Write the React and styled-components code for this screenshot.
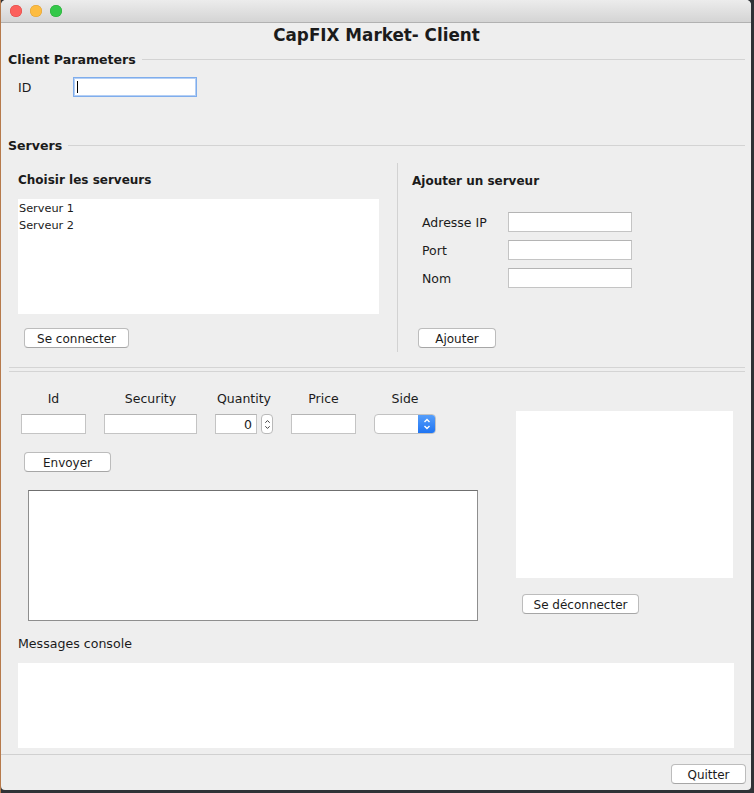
import styled, { createGlobalStyle } from 'styled-components';

const GlobalStyle = createGlobalStyle`
	html, body {
		margin: 0;
		padding: 0;
	}
	body {
		width: 754px;
		height: 793px;
		overflow: hidden;
		background: linear-gradient(to right, #b67a4c 0, #b67a4c 1px, #2f3236 1px);
		font-family: "DejaVu Sans", sans-serif;
	}
`;

const Window = styled.div`
	width: 750px;
	height: 790px;
	margin-left: 1px;
	background: #eeeeee;
	border-radius: 5px 5px 4px 4px;
	overflow: hidden;
	display: flex;
	flex-direction: column;
	color: #1b1b1b;
`;

const TitleBar = styled.div`
	height: 22px;
	flex-shrink: 0;
	display: flex;
	align-items: center;
	gap: 8px;
	padding-left: 9px;
	background: linear-gradient(#ececec, #d4d4d4);
	border-bottom: 1px solid #b1b1b1;
`;

const Light = styled.span`
	width: 12px;
	height: 12px;
	border-radius: 50%;
	background: ${(p) => p.$color};
	box-shadow: inset 0 0 0 0.5px ${(p) => p.$edge};
`;

const Content = styled.div`
	display: flex;
	flex-direction: column;
	padding: 0 6px 0 7px;
`;

const Title = styled.div`
	height: 24px;
	line-height: 24px;
	text-align: center;
	font-weight: bold;
	font-size: 16.8px;
`;

const Legend = styled.div`
	display: flex;
	align-items: center;
	gap: 6px;
	height: 16px;
	margin-top: ${(p) => p.$top}px;
	font-weight: bold;
	font-size: 12.6px;

	&::after {
		content: '';
		flex: 1;
		height: 1px;
		background: #d3d3d3;
	}
`;

const IdRow = styled.div`
	display: flex;
	align-items: center;
	margin-top: 10px;
	padding-left: 10px;
	font-size: 12.5px;
`;

const IdLabel = styled.span`
	width: 55px;
`;

const FocusField = styled.div`
	width: 124px;
	height: 20px;
	box-sizing: border-box;
	background: #fff;
	border: 1px solid #7fadec;
	box-shadow: inset 0 0 0 1px #b4cff5;
	display: flex;
	align-items: center;
	padding-left: 3px;
`;

const Caret = styled.span`
	width: 1px;
	height: 12px;
	background: #000;
`;

const ServersBody = styled.div`
	display: grid;
	grid-template-columns: 390px 1fr;
	height: 189px;
	margin-top: 10px;
`;

const LeftPanel = styled.div`
	border-right: 1px solid #d2d2d2;
	padding: 8px 0 0 10px;
	display: flex;
	flex-direction: column;
	align-items: flex-start;
`;

const RightPanel = styled.div`
	padding: 9px 0 0 14px;
	display: flex;
	flex-direction: column;
	align-items: flex-start;
`;

const PanelHeading = styled.div`
	height: 16px;
	box-sizing: border-box;
	padding-top: 1px;
	line-height: 16px;
	font-weight: bold;
	font-size: 12px;
`;

const ServerList = styled.div`
	width: 361px;
	height: 115px;
	margin-top: 12px;
	background: #fff;
	padding: 1px 0 0 1px;
	box-sizing: border-box;
	font-size: 11.3px;
`;

const ListItem = styled.div`
	height: 17px;
	line-height: 17px;
`;

const Button = styled.div`
	width: ${(p) => p.$w}px;
	height: 20px;
	box-sizing: border-box;
	margin-top: ${(p) => p.$top || 0}px;
	margin-left: ${(p) => p.$left || 0}px;
	padding-top: 1px;
	background: #fff;
	border: 1px solid #bcbcbc;
	border-bottom-color: #a6a6a6;
	border-radius: 4px;
	display: flex;
	align-items: center;
	justify-content: center;
	font-size: 12px;
	flex-shrink: 0;
`;

const AddForm = styled.div`
	display: grid;
	grid-template-columns: 86px 124px;
	grid-auto-rows: 20px;
	row-gap: 8px;
	align-items: center;
	margin-top: 24px;
	margin-left: 10px;
	font-size: 12.5px;
`;

const TextField = styled.div`
	width: ${(p) => p.$w || 124}px;
	height: 20px;
	box-sizing: border-box;
	background: #fff;
	border: 1px solid #c4c4c4;
	border-top-color: #b4b4b4;
	font-size: 12.5px;
	text-align: ${(p) => (p.$align === 'right' ? 'right' : 'left')};
	padding: 0 4px;
	line-height: 19px;
`;

const DoubleRule = styled.div`
	height: 3px;
	margin: 15px 0 0 1px;
	border-top: 1px solid #d4d4d4;
	border-bottom: 1px solid #d4d4d4;
`;

const OrderArea = styled.div`
	display: flex;
`;

const OrderLeft = styled.div`
	width: 508px;
	display: flex;
	flex-direction: column;
	align-items: flex-start;
`;

const OrderRight = styled.div`
	display: flex;
	flex-direction: column;
	align-items: flex-start;
	padding-top: 39px;
`;

const FieldsRow = styled.div`
	display: flex;
	gap: 18px;
	margin-top: 18px;
	padding-left: 13px;
`;

const FieldCol = styled.div`
	display: flex;
	flex-direction: column;
	align-items: center;
	gap: 8px;
`;

const FieldLabel = styled.div`
	height: 16px;
	box-sizing: border-box;
	padding-top: 1px;
	line-height: 16px;
	font-size: 12.5px;
`;

const SpinRow = styled.div`
	display: flex;
	align-items: center;
	gap: 4px;
`;

const Spinner = styled.div`
	width: 12px;
	height: 20px;
	box-sizing: border-box;
	border: 1px solid #b9b9b9;
	border-radius: 4px;
	background: #fff;
	display: flex;
	align-items: center;
	justify-content: center;
`;

const Combo = styled.div`
	width: 62px;
	height: 20px;
	box-sizing: border-box;
	border: 1px solid #c2c2c2;
	border-radius: 4px;
	background: #fff;
	display: flex;
	justify-content: flex-end;
	overflow: hidden;
`;

const ComboArrow = styled.div`
	width: 18px;
	margin: -1px -1px -1px 0;
	background: linear-gradient(#58a0fb, #1c72f2);
	display: flex;
	align-items: center;
	justify-content: center;
`;

const WhiteBox = styled.div`
	width: ${(p) => p.$w}px;
	height: ${(p) => p.$h}px;
	margin-top: ${(p) => p.$top || 0}px;
	margin-left: ${(p) => p.$left || 0}px;
	box-sizing: border-box;
	background: #fff;
	border: ${(p) => (p.$bordered ? '1px solid #8e8e8e' : 'none')};
	border-top-color: ${(p) => (p.$bordered ? '#6f6f6f' : 'transparent')};
`;

const ConsoleLabel = styled.div`
	margin-top: 14px;
	padding: 1px 0 0 10px;
	height: 16px;
	box-sizing: border-box;
	line-height: 16px;
	font-size: 12.6px;
`;

const Footer = styled.div`
	margin-top: auto;
	border-top: 1px solid #d0d0d0;
	padding: 9px 5px 6px 0;
	display: flex;
	justify-content: flex-end;
`;

const Chevrons = ({ color, w = 8, h = 13, stroke = 1.2 }) => (
	<svg width={w} height={h} viewBox="0 0 8 13" fill="none">
		<path d="M1.5 4.5 L4 2 L6.5 4.5" stroke={color} strokeWidth={stroke} />
		<path d="M1.5 8.5 L4 11 L6.5 8.5" stroke={color} strokeWidth={stroke} />
	</svg>
);

export default function App() {
	return (
		<>
			<GlobalStyle />
			<Window>
				<TitleBar>
					<Light $color="#fc605c" $edge="#de4643" />
					<Light $color="#fdbc40" $edge="#de9f34" />
					<Light $color="#34c84a" $edge="#27aa35" />
				</TitleBar>
				<Content>
					<Title>CapFIX Market- Client</Title>

					<Legend $top={4}>Client Parameters</Legend>
					<IdRow>
						<IdLabel>ID</IdLabel>
						<FocusField>
							<Caret />
						</FocusField>
					</IdRow>

					<Legend $top={40}>Servers</Legend>
					<ServersBody>
						<LeftPanel>
							<PanelHeading>Choisir les serveurs</PanelHeading>
							<ServerList>
								<ListItem>Serveur 1</ListItem>
								<ListItem>Serveur 2</ListItem>
							</ServerList>
							<Button $w={105} $top={14} $left={6}>
								Se connecter
							</Button>
						</LeftPanel>
						<RightPanel>
							<PanelHeading>Ajouter un serveur</PanelHeading>
							<AddForm>
								<span>Adresse IP</span>
								<TextField />
								<span>Port</span>
								<TextField />
								<span>Nom</span>
								<TextField />
							</AddForm>
							<Button $w={78} $top={40} $left={6}>
								Ajouter
							</Button>
						</RightPanel>
					</ServersBody>

					<DoubleRule />

					<OrderArea>
						<OrderLeft>
							<FieldsRow>
								<FieldCol>
									<FieldLabel>Id</FieldLabel>
									<TextField $w={65} />
								</FieldCol>
								<FieldCol>
									<FieldLabel>Security</FieldLabel>
									<TextField $w={93} />
								</FieldCol>
								<FieldCol>
									<FieldLabel>Quantity</FieldLabel>
									<SpinRow>
										<TextField $w={42} $align="right">
											0
										</TextField>
										<Spinner>
											<Chevrons color="#3a3a3a" w={7} h={15} stroke={1.1} />
										</Spinner>
									</SpinRow>
								</FieldCol>
								<FieldCol>
									<FieldLabel>Price</FieldLabel>
									<TextField $w={65} />
								</FieldCol>
								<FieldCol>
									<FieldLabel>Side</FieldLabel>
									<Combo>
										<ComboArrow>
											<Chevrons color="#fff" w={8} h={14} stroke={1.4} />
										</ComboArrow>
									</Combo>
								</FieldCol>
							</FieldsRow>
							<Button $w={87} $top={18} $left={16}>
								Envoyer
							</Button>
							<WhiteBox $w={450} $h={131} $top={18} $left={20} $bordered />
						</OrderLeft>
						<OrderRight>
							<WhiteBox $w={217} $h={167} />
							<Button $w={117} $top={16} $left={6}>
								Se déconnecter
							</Button>
						</OrderRight>
					</OrderArea>

					<ConsoleLabel>Messages console</ConsoleLabel>
					<WhiteBox $w={716} $h={85} $top={12} $left={10} />
				</Content>
				<Footer>
					<Button $w={75}>Quitter</Button>
				</Footer>
			</Window>
		</>
	);
}
